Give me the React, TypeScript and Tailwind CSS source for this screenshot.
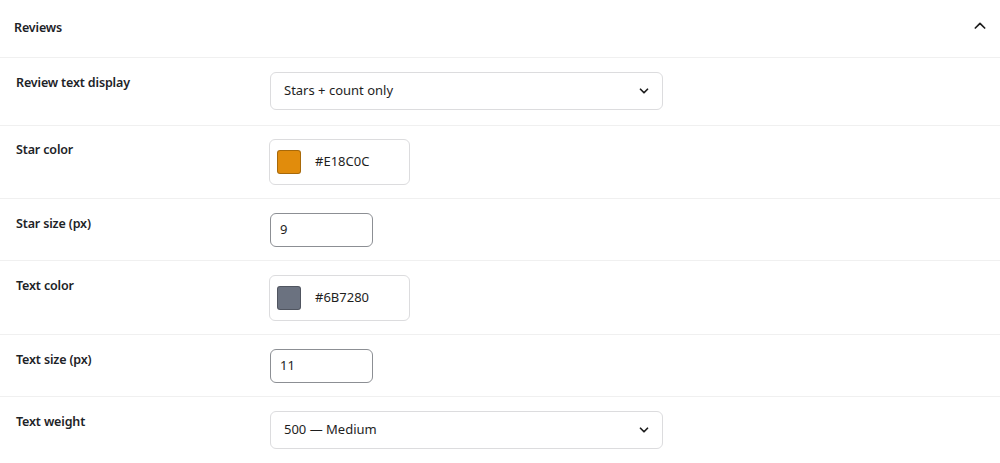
import React from 'react';

const ChevronDown = () => (
  <svg width="14" height="14" viewBox="0 0 24 24" fill="none" stroke="#1e1e1e" strokeWidth="3" strokeLinecap="round" strokeLinejoin="round">
    <path d="M6 9l6 6 6-6" />
  </svg>
);

const ChevronUp = () => (
  <svg width="16" height="16" viewBox="0 0 24 24" fill="none" stroke="#1e1e1e" strokeWidth="2.6" strokeLinecap="round" strokeLinejoin="round">
    <path d="M5 15l7-7 7 7" />
  </svg>
);

const Row: React.FC<{ label: string; py: string; children: React.ReactNode; last?: boolean }> = ({ label, py, children, last }) => (
  <div className={`flex pl-4 ${py} ${last ? '' : 'border-b border-[#f0f0f0]'}`}>
    <div className="w-[254px] shrink-0 pt-[2px] text-[12.5px] leading-[18px] font-semibold tracking-[-0.15px] text-[#1d2327]">{label}</div>
    <div>{children}</div>
  </div>
);

const SelectBox: React.FC<{ value: string }> = ({ value }) => (
  <div className="w-[393px] h-[38px] flex items-center justify-between pl-[13px] pr-[11px] border border-[#dcdcde] rounded-[6px] bg-white text-[13px] text-[#1e1e1e]">
    <span>{value}</span>
    <ChevronDown />
  </div>
);

const ColorBox: React.FC<{ color: string }> = ({ color }) => (
  <div className="w-[141px] h-[46px] flex items-center pl-[7px] border border-[#dcdcde] rounded-[6px] bg-white -ml-[1px]">
    <span className="w-[24px] h-[24px] rounded-[3px] border border-black/25" style={{ backgroundColor: color }} />
    <span className="ml-[14px] text-[13px] text-[#1e1e1e]">{color}</span>
  </div>
);

const NumberBox: React.FC<{ value: string }> = ({ value }) => (
  <div className="w-[103px] h-[34px] flex items-center pl-[9px] border border-[#8c8f94] rounded-[6px] bg-white text-[13px] text-[#1e1e1e]">
    {value}
  </div>
);

export default function App() {
  return (
    <div className="w-[1000px] h-[463px] overflow-hidden bg-white font-['Noto_Sans','Open_Sans',sans-serif]">
      <div className="h-[58px] flex items-center justify-between pl-[14px] pr-[12px] border-b border-[#f0f0f0]">
        <span className="text-[12.5px] font-semibold tracking-[-0.15px] text-[#1d2327]">Reviews</span>
        <span className="mb-[6px]"><ChevronUp /></span>
      </div>
      <Row label="Review text display" py="pt-[14px] pb-[15px]">
        <SelectBox value="Stars + count only" />
      </Row>
      <Row label="Star color" py="pt-[13px] pb-[13px]">
        <ColorBox color="#E18C0C" />
      </Row>
      <Row label="Star size (px)" py="pt-[14px] pb-[13px]">
        <NumberBox value="9" />
      </Row>
      <Row label="Text color" py="pt-[14px] pb-[13px]">
        <ColorBox color="#6B7280" />
      </Row>
      <Row label="Text size (px)" py="pt-[14px] pb-[13px]">
        <NumberBox value="11" />
      </Row>
      <Row label="Text weight" py="pt-[14px] pb-[16px]" last>
        <SelectBox value="500 — Medium" />
      </Row>
    </div>
  );
}
